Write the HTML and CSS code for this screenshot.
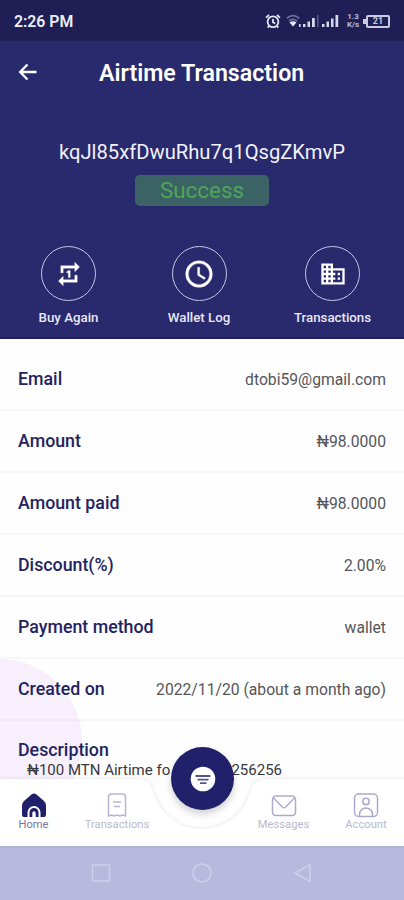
FILE: index.html
```html
<!DOCTYPE html>
<html lang="en">
<head>
<meta charset="utf-8">
<title>Airtime Transaction</title>
<link rel="stylesheet" href="styles.css">
</head>
<body>
<div class="screen">
  <div class="status">
    <span class="time">2:26 PM</span>
    <div class="indicators">
      <svg class="alarm" width="16" height="16" viewBox="0 0 16 16" fill="none" stroke="#e6e6f5" stroke-width="1.8"><circle cx="8" cy="8.800" r="5.4"/><path d="M8 6v3.3l2.2 1.2M1 4.6l3-2.6M15 4.6L12 2M4 13.200l-1.300 1.500M12 13.200l1.300 1.500"/></svg>
      <svg class="signals" width="54" height="16" viewBox="0 0 54 16"><g fill="none" stroke="#70709f" stroke-width="1.8"><path d="M.8 5.2Q7 0 13.2 5.2M3 8Q7 4.8 11 8"/></g><path d="M3.500 9.500Q7 7 10.500 9.500L7 13.500z" fill="#e3e3f5"/><g fill="#d8d8ec"><path d="M13 11h1.600v3H13zM17 11h2.500v3H17zM21.500 8.500H24V14h-2.500zM26 5h2.800v9H26zM36 11h2.500v3H36zM40.500 8.500H43V14h-2.500zM45 5.500h2.500V14H45zM49.500 2h2.700v12h-2.700z"/></g><path d="M31 2h1.600v12H31z" fill="#56568a"/></svg>
      <div class="speed"><span>1.3</span><span>K/s</span></div>
      <div class="battery">21</div>
    </div>
  </div>
  <header class="hero">
    <div class="titlebar">
      <div class="back"><svg width="20" height="18" viewBox="0 0 20 18" fill="none" stroke="#fff" stroke-width="2.4"><path d="M18.5 9H2.5M9.5 1.5L2.2 9l7.3 7.5"/></svg></div>
      <h1>Airtime Transaction</h1>
    </div>
    <div class="ident">kqJl85xfDwuRhu7q1QsgZKmvP</div>
    <div class="badge">Success</div>
    <div class="actions">
      <div class="action"><div class="ring"><svg width="28" height="28" viewBox="0 0 24 24" fill="#fff" stroke="#fff" stroke-width=".35"><path d="M7 7h10v3l4-4-4-4v3H5v6h2zm10 10H7v-3l-4 4 4 4v-3h12v-6h-2zm-4-2V9h-1l-2 1v1h1.500v4z"/></svg></div><span>Buy Again</span></div>
      <div class="action"><div class="ring"><svg width="32" height="32" viewBox="0 0 24 24" fill="#fff" stroke="#fff" stroke-width=".3"><path d="M12 2a10 10 0 1 0 0 20 10 10 0 0 0 0-20zm0 18a8 8 0 1 1 0-16 8 8 0 0 1 0 16zM12.500 7H11v6l5 3.100.8-1.300-4.300-2.600z"/></svg></div><span>Wallet Log</span></div>
      <div class="action"><div class="ring"><svg width="28" height="28" viewBox="0 0 24 24" fill="#fff"><path d="M12 7V3H2v18h20V7zM6 19H4v-2h2zm0-4H4v-2h2zm0-4H4V9h2zm0-4H4V5h2zm4 12H8v-2h2zm0-4H8v-2h2zm0-4H8V9h2zm0-4H8V5h2zm10 12h-8v-2h2v-2h-2v-2h2v-2h-2V9h8zm-2-8h-2v2h2zm0 4h-2v2h2z"/></svg></div><span>Transactions</span></div>
    </div>
  </header>
  <main class="details">
    <div class="row"><b>Email</b><span>dtobi59@gmail.com</span></div>
    <div class="row"><b>Amount</b><span>₦98.0000</span></div>
    <div class="row"><b>Amount paid</b><span>₦98.0000</span></div>
    <div class="row"><b>Discount(%)</b><span>2.00%</span></div>
    <div class="row"><b>Payment method</b><span>wallet</span></div>
    <div class="row"><b>Created on</b><span>2022/11/20 (about a month ago)</span></div>
    <div class="description"><b>Description</b><p><span>₦100 MTN Airtime fo</span><span>256256</span></p></div>
  </main>
  <nav class="nav">
    <svg class="nav-shape" width="404" height="67" viewBox="0 0 404 67"><path fill="#fff" d="M0 0H138C148 0 151 5 153 12C160 36 179 50 202 50S244 36 251 12C253 5 256 0 266 0H404V67H0Z"/></svg>
    <div class="item home"><svg width="26" height="25" viewBox="0 0 26 25"><path fill="#20206b" d="M10.500 1.600Q13-.4 15.500 1.600L23 8Q25 10 25 12.500V22q0 2-2 2h-3.500v-4.500a6.500 6.500 0 0 0-13 0V24H3q-2 0-2-2v-9.500Q1 10 3 8z"/><path fill="#20206b" d="M8.500 24v-4.500a4.500 4.500 0 0 1 9 0V24h-2.800v-4a1.700 1.700 0 0 0-3.400 0v4z"/></svg><span>Home</span></div>
    <div class="item"><svg width="26" height="25" viewBox="0 0 26 25" fill="none" stroke="#b6b6cf" stroke-width="1.500"><path d="M4.500 23V4q0-3 3-3h11q3 0 3 3v19l-3-1-2.700 1-2.800-1-2.800 1-2.700-1zM9 9h8M10 13.500h6"/></svg><span>Transactions</span></div>
    <div class="item mess"><svg width="26" height="25" viewBox="0 0 26 25" fill="none" stroke="#aaaacb" stroke-width="1.500"><rect x="1.500" y="3" width="23" height="19.500" rx="3.500"/><path d="M2.500 5l8.800 9q1.700 1.500 3.400 0l8.800-9"/></svg><span>Messages</span></div>
    <div class="item acc"><svg width="26" height="25" viewBox="0 0 26 25" fill="none" stroke="#aaaacb" stroke-width="1.500"><rect x="1.500" y="1" width="23" height="22.500" rx="4"/><circle cx="13" cy="8.500" r="3.200"/><path d="M6.500 23v-1.500a6.500 6.500 0 0 1 13 0V23"/></svg><span>Account</span></div>
    <div class="fab"><svg width="26" height="26" viewBox="0 0 26 26"><circle cx="13" cy="13" r="12.300" fill="#fff"/><path d="M5.500 10h15M7.500 13.700h11M10 17.200h6.500" stroke="#55558c" stroke-width="1.800"/></svg></div>
  </nav>
  <div class="system">
    <svg width="20" height="20" viewBox="0 0 20 20"><rect x="1.500" y="2" width="17" height="16"/></svg>
    <svg width="20" height="20" viewBox="0 0 20 20"><circle cx="10" cy="10" r="9"/></svg>
    <svg width="20" height="20" viewBox="0 0 20 20"><path d="M17 1.500v17L2 10z"/></svg>
  </div>
</div>
</body>
</html>
```
FILE: styles.css
```css
* { box-sizing: border-box; }
body { margin: 0; font-family: Roboto, "Noto Sans", sans-serif; }
.screen { width: 404px; height: 900px; display: flex; flex-direction: column; overflow: hidden; background: #fefefe; }
.status { height: 41px; flex: none; display: flex; align-items: center; justify-content: space-between; padding: 1px 14px 0 14px; background: #1f1f55; color: #eeeef8; }
.time { font-size: 15.800px; font-weight: 600; }
.indicators { display: flex; align-items: center; }
.alarm { margin-right: 5px; }
.speed { width: 12px; margin: 0 7px 0 7px; display: flex; flex-direction: column; align-items: center; font-size: 8px; line-height: 8px; font-weight: 700; color: #bbbbd8; }
.battery { position: relative; width: 24px; height: 13px; border: 2px solid #cacae2; border-radius: 2px; font-size: 9px; line-height: 9px; text-align: center; font-weight: 700; color: #cacae2; }
.battery::before { content: ""; position: absolute; left: -5px; top: 2px; width: 3px; height: 5px; background: #cacae2; }
.hero { height: 298px; flex: none; background: #29296e; color: #fff; display: flex; flex-direction: column; align-items: center; border-bottom: 2px solid #20205e; }
.titlebar { width: 100%; height: 62px; display: flex; align-items: center; }
.back { width: 99px; padding-left: 18px; height: 18px; }
.back svg { display: block; }
h1 { margin: 2px 0 0; font-size: 23.200px; font-weight: 600; line-height: 30px; white-space: nowrap; }
.ident { margin-top: 35px; height: 28px; line-height: 28px; font-size: 20.200px; white-space: nowrap; color: #f2f2fb; }
.badge { margin-top: 9px; width: 134px; height: 31px; border-radius: 5px; background: #3b6365; color: #4ea559; font-size: 22.400px; line-height: 31px; text-align: center; }
.actions { margin-top: 40px; width: 396px; display: grid; grid-template-columns: 129px 132px 135px; }
.action { display: flex; flex-direction: column; align-items: center; font-size: 13.300px; font-weight: 500; line-height: 16px; color: #e8e8f6; }
.ring { width: 55px; height: 55px; border: 1.500px solid #c6c6e4; border-radius: 50%; display: flex; align-items: center; justify-content: center; margin-bottom: 9px; }
.details { position: relative; flex: 1; padding-top: 10px; overflow: hidden; }
.details::before { content: ""; position: absolute; left: -82px; top: 320px; width: 164px; height: 164px; border-radius: 50%; background: #f8effd; }
.row { position: relative; height: 62px; padding: 0 18px; display: flex; align-items: center; justify-content: space-between; border-bottom: 2px solid rgba(40, 40, 90, .03); }
b { font-size: 17.800px; line-height: 20px; font-weight: 500; color: #23235f; }
.row span { font-size: 15.700px; color: #55555a; }
.description { position: relative; padding: 19px 18px 0; }
.description b { display: block; }
.description p { margin: 0 0 0 9px; display: flex; width: 255px; justify-content: space-between; font-size: 15px; line-height: 20px; color: #38383e; }
.nav { position: relative; height: 67px; flex: none; display: grid; grid-template-columns: 67px 100px 67px 99px 66px; }
.nav-shape { position: absolute; inset: 0; filter: drop-shadow(0 0 2px rgba(0, 0, 0, .1)); overflow: visible; }
.item { position: relative; padding-top: 14px; display: flex; flex-direction: column; align-items: center; font-size: 11.200px; line-height: 13px; color: #b9b9cc; }
.item svg { display: block; flex: none; }
.home { color: #77779e; }
.mess { grid-column: 4; }
.acc { grid-column: 5; }
.fab { position: absolute; left: 171px; top: -32px; width: 63px; height: 63px; border-radius: 50%; background: #20206b; display: flex; align-items: center; justify-content: center; box-shadow: 0 4px 7px rgba(0, 0, 0, .18); }
.system { height: 54px; flex: none; background: #b9b9dd; display: flex; justify-content: center; align-items: center; gap: 81px; }
.system svg { fill: none; stroke: #cfcfeb; stroke-width: 1.500; }
```
